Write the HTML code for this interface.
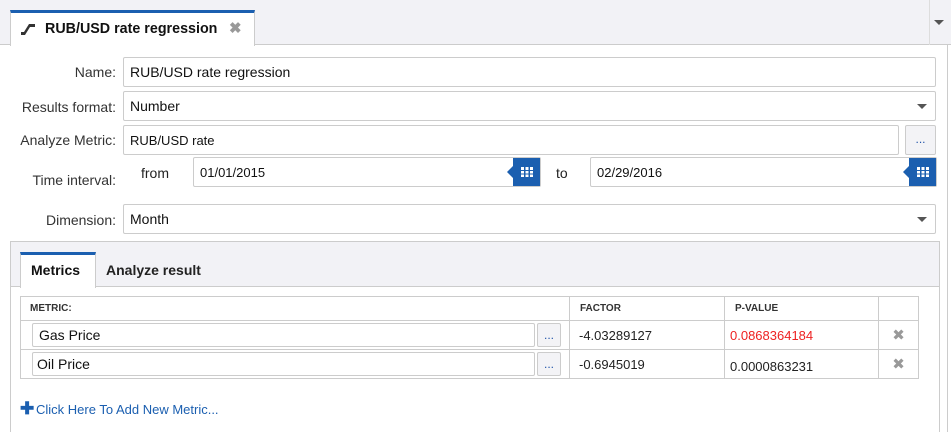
<!DOCTYPE html>
<html><head><style>
*{box-sizing:border-box;margin:0;padding:0}
html,body{width:951px;height:432px;overflow:hidden}
body{background:#fff;font-family:"Liberation Sans",sans-serif;font-size:14px;color:#222;position:relative}
.a{position:absolute}
.inp{position:absolute;border:1px solid #ccc;border-radius:2px;background:#fff;padding-left:6px;display:flex;align-items:center;font-size:14px;color:#111}
.lbl{position:absolute;text-align:right;width:116px;left:0;font-size:14px;color:#333}
.btn{position:absolute;border:1px solid #ccc;border-radius:2px;background:#f3f3f6;text-align:center;color:#2255aa;font-size:12px;line-height:26px}
.cal{position:absolute;background:#1b5fb0;width:27px}
.cal:before{content:"";position:absolute;left:-6px;top:8px;border-right:6px solid #1b5fb0;border-top:6px solid transparent;border-bottom:6px solid transparent}
.grid{position:absolute;left:8px;top:9px;width:12px;height:10px;background:
linear-gradient(90deg,#fff 3px,transparent 3px,transparent 4.5px,#fff 4.5px,#fff 7.5px,transparent 7.5px,transparent 9px,#fff 9px)}
.grid:after{content:"";position:absolute;left:0;right:0;top:2.5px;height:1.5px;background:#1b5fb0;box-shadow:0 3.5px 0 #1b5fb0}
.caret{position:absolute;width:0;height:0;border-left:5px solid transparent;border-right:5px solid transparent;border-top:5px solid #555}
td{border:1px solid #ccc;font-size:13px}
</style></head><body>
<div class="a" style="left:0;top:0;width:951px;height:45px;background:#f2f2f6;border-bottom:1px solid #ccc"></div>
<div class="a" style="left:929px;top:0;width:1px;height:45px;background:#ddd"></div>
<div class="caret" style="left:934px;top:20px"></div>
<div class="a" style="left:10px;top:10px;width:245px;height:36px;background:#fff;border:1px solid #ccc;border-top:3px solid #1b5fb0;border-bottom:none"></div>
<svg class="a" style="left:20px;top:22px" width="16" height="14"><path d="M1 13 L5 13 L10 5 L15 5 L15 2 L9 2 L4 10 L1 10Z" fill="#333"/></svg>
<div class="a" style="left:45px;top:21px;font-weight:bold;font-size:14.3px;color:#111">RUB/USD rate regression</div>
<div class="a" style="left:229px;top:19px;font-size:15px;font-weight:bold;color:#999">✖</div>
<div class="a" style="left:947px;top:45px;width:1px;height:387px;background:#ccc"></div>

<div class="lbl" style="top:64px">Name:</div>
<div class="inp" style="left:123px;top:57px;width:813px;height:30px">RUB/USD rate regression</div>
<div class="lbl" style="top:99px">Results format:</div>
<div class="inp" style="left:123px;top:91px;width:813px;height:30px">Number</div>
<div class="caret" style="left:917px;top:104px"></div>
<div class="lbl" style="top:132px">Analyze Metric:</div>
<div class="inp" style="left:123px;top:125px;width:776px;height:30px;font-size:13px">RUB/USD rate</div>
<div class="btn" style="left:905px;top:125px;width:31px;height:30px">...</div>
<div class="lbl" style="top:172px">Time interval:</div>
<div class="a" style="left:141px;top:165px">from</div>
<div class="inp" style="left:193px;top:157px;width:348px;height:30px;font-size:13px">01/01/2015</div>
<div class="cal" style="left:513px;top:158px;height:28px"><div class="grid"></div></div>
<div class="a" style="left:556px;top:165px">to</div>
<div class="inp" style="left:590px;top:157px;width:347px;height:30px;font-size:13px">02/29/2016</div>
<div class="cal" style="left:909px;top:158px;height:28px"><div class="grid"></div></div>
<div class="lbl" style="top:212px">Dimension:</div>
<div class="inp" style="left:123px;top:204px;width:813px;height:30px">Month</div>
<div class="caret" style="left:917px;top:217px"></div>

<div class="a" style="left:10px;top:241px;width:930px;height:191px;border:1px solid #ccc;border-bottom:none;background:#fff"></div>
<div class="a" style="left:11px;top:242px;width:928px;height:45px;background:#f2f2f6;border-bottom:1px solid #ccc"></div>
<div class="a" style="left:20px;top:252px;width:76px;height:36px;background:#fff;border:1px solid #ccc;border-top:3px solid #1b5fb0;border-bottom:none"></div>
<div class="a" style="left:31px;top:262px;font-weight:bold;font-size:14px;color:#111">Metrics</div>
<div class="a" style="left:106px;top:262px;font-weight:bold;font-size:14px;color:#222">Analyze result</div>

<table class="a" style="left:20px;top:296px;width:899px;border-collapse:collapse">
<tr style="height:24px"><td style="width:549px;padding-left:9px;font-size:10px;font-weight:bold;color:#333">METRIC:</td><td style="width:155px;padding-left:10px;font-size:10px;font-weight:bold;color:#333">FACTOR</td><td style="width:154px;padding-left:10px;font-size:10px;font-weight:bold;color:#333">P-VALUE</td><td></td></tr>
<tr style="height:29px"><td></td><td style="padding-left:9px">-4.03289127</td><td style="padding-left:5px;color:#e22">0.0868364184</td><td style="text-align:center;color:#999;font-size:15px">✖</td></tr>
<tr style="height:29px"><td></td><td style="padding-left:9px">-0.6945019</td><td style="padding-left:5px;padding-top:4px">0.0000863231</td><td style="text-align:center;color:#999;font-size:15px">✖</td></tr>
</table>
<div class="inp" style="left:32px;top:323px;width:503px;height:24px;padding-left:6px">Gas Price</div>
<div class="btn" style="left:537px;top:323px;width:24px;height:24px;line-height:22px">...</div>
<div class="inp" style="left:32px;top:352px;width:503px;height:24px;padding-left:4px">Oil Price</div>
<div class="btn" style="left:537px;top:352px;width:24px;height:24px;line-height:22px">...</div>
<div class="a" style="left:20px;top:399px;color:#1b5fb0;font-weight:bold;font-size:17px">✚</div>
<div class="a" style="left:36px;top:402px;color:#1b5fb0;font-size:13px">Click Here To Add New Metric...</div>
</body></html>
